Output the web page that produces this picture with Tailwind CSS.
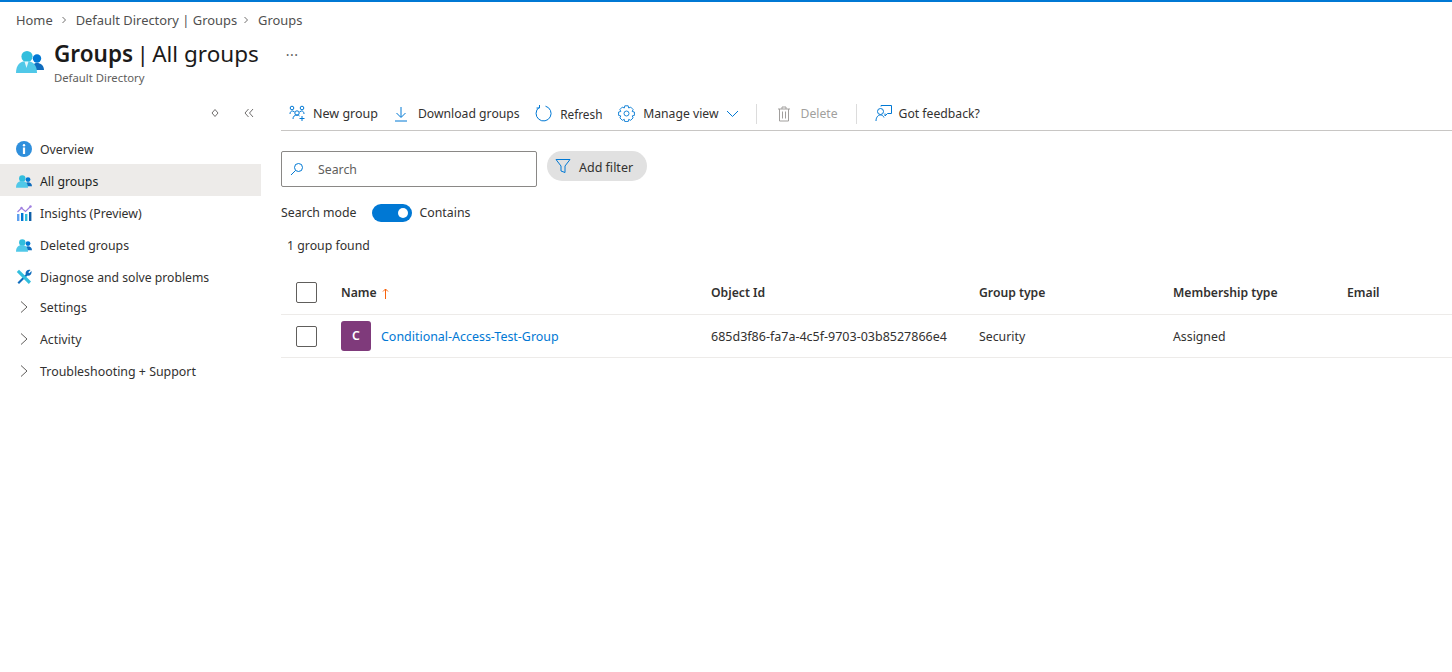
<!DOCTYPE html>
<html lang="en">
<head>
<meta charset="UTF-8">
<title>Groups | All groups</title>
<script src="https://cdn.jsdelivr.net/npm/@tailwindcss/browser@4"></script>
</head>
<body class="bg-white">
<div class="w-[1452px] h-[672px] overflow-hidden border-t-2 border-[#0078d4] font-['Noto_Sans','Open_Sans',sans-serif] text-[12.3px] text-[#323130]">

  <!-- breadcrumb -->
  <nav class="h-[31px] pl-[16px] pt-[5px] flex items-center text-[12.9px] text-[#505050] leading-[18px]">
    <span>Home</span>
    <svg class="w-[8px] h-[8px] ml-[7px] mr-[8px]" viewBox="0 0 8 8" fill="none" stroke="#605e5c" stroke-width="0.9"><path d="M2.5 1l3 3-3 3"/></svg>
    <span>Default Directory | Groups</span>
    <svg class="w-[8px] h-[8px] ml-[5px] mr-[8px]" viewBox="0 0 8 8" fill="none" stroke="#605e5c" stroke-width="0.9"><path d="M2.5 1l3 3-3 3"/></svg>
    <span>Groups</span>
  </nav>

  <!-- page title -->
  <header class="h-[63px] flex pl-[16px]">
    <svg class="w-[28px] h-[28px] mt-[14px]" viewBox="0 0 28 28">
      <circle cx="21" cy="11.500" r="4.200" fill="#0078d4"/>
      <path d="M16 23c0-4.500 1.500-7 5-7s7 2.500 7 7z" fill="#0f6cbd"/>
      <circle cx="11" cy="9.500" r="5.600" fill="#32bedd"/>
      <path d="M0 26c0-8 4-12 10.500-12S21 18 21 26z" fill="#50c8e8"/>
      <path d="M8.500 14.500h4L10.500 21z" fill="#ffffff" opacity=".85"/>
    </svg>
    <div class="ml-[10px] pt-[5px]">
      <div class="text-[22.500px] leading-[32px] text-[#1b1a19]"><span class="font-semibold">Groups</span><span class="-mx-[2.500px]"> | </span>All groups</div>
      <div class="text-[11.300px] leading-[16px] text-[#605e5c]">Default Directory</div>
    </div>
    <div class="ml-[27px] mt-[12px] text-[14px] leading-[20px] text-[#605e5c] tracking-[0.5px]">···</div>
  </header>

  <div class="flex">
    <!-- sidebar -->
    <aside class="w-[261px] shrink-0">
      <div class="h-[34px] flex items-center justify-end pr-[5px]">
        <svg class="w-[10px] h-[10px] mr-[24px]" viewBox="0 0 10 10" fill="none" stroke="#605e5c" stroke-width="0.9"><path d="M5 1.500 8 5 5 8.500 2 5z"/></svg>
        <svg class="w-[10px] h-[10px] mr-[2px]" viewBox="0 0 10 10" fill="none" stroke="#605e5c" stroke-width="0.9"><path d="M4.500 1 1 5l3.500 4M9 1 5.500 5 9 9"/></svg>
      </div>
      <ul>
        <li class="h-[32px] mt-[2px] pt-[3px] flex items-center pl-[16px]">
          <svg class="w-[16px] h-[16px] mr-[8px] mb-[1px]" viewBox="0 0 16 16"><circle cx="8" cy="8" r="8" fill="#2f8fdc"/><circle cx="8" cy="4.300" r="1.200" fill="#fff"/><rect x="6.900" y="6.500" width="2.200" height="6.500" fill="#fff"/></svg>
          <span class="pt-[2px]">Overview</span>
        </li>
        <li class="h-[32px] pt-[3px] flex items-center pl-[16px] bg-[#edebe9] text-[#201f1e]">
          <svg class="w-[16px] h-[16px] mr-[8px] mb-[1px]" viewBox="0 0 28 28"><circle cx="21" cy="11.500" r="4.200" fill="#0078d4"/><path d="M16 23c0-4.500 1.500-7 5-7s7 2.500 7 7z" fill="#0f6cbd"/><circle cx="11" cy="9.500" r="5.600" fill="#32bedd"/><path d="M0 26c0-8 4-12 10.500-12S21 18 21 26z" fill="#50c8e8"/></svg>
          <span class="pt-[2px]">All groups</span>
        </li>
        <li class="h-[32px] pt-[3px] flex items-center pl-[16px]">
          <svg class="w-[16px] h-[16px] mr-[8px] mb-[1px]" viewBox="0 0 16 16"><rect x="1" y="9" width="2.400" height="7" fill="#5ea0ef"/><rect x="5" y="8" width="2.400" height="8" fill="#0078d4"/><rect x="9" y="9" width="2.400" height="7" fill="#32bedd"/><rect x="13" y="7" width="2.400" height="9" fill="#0f5fa8"/><path d="M1.500 7 5.500 3 9.500 6.500 14.500 1.500" fill="none" stroke="#9f7fe0" stroke-width="1.200"/><circle cx="5.500" cy="3" r="1.200" fill="#9f7fe0"/><circle cx="14.500" cy="1.500" r="1.200" fill="#9f7fe0"/></svg>
          <span class="pt-[2px]">Insights (Preview)</span>
        </li>
        <li class="h-[32px] pt-[3px] flex items-center pl-[16px]">
          <svg class="w-[16px] h-[16px] mr-[8px] mb-[1px]" viewBox="0 0 28 28"><circle cx="21" cy="11.500" r="4.200" fill="#0078d4"/><path d="M16 23c0-4.500 1.500-7 5-7s7 2.500 7 7z" fill="#0f6cbd"/><circle cx="11" cy="9.500" r="5.600" fill="#32bedd"/><path d="M0 26c0-8 4-12 10.500-12S21 18 21 26z" fill="#50c8e8"/></svg>
          <span class="pt-[2px]">Deleted groups</span>
        </li>
        <li class="h-[32px] pt-[3px] flex items-center pl-[16px]">
          <svg class="w-[16px] h-[16px] mr-[8px] mb-[1px]" viewBox="0 0 16 16"><path d="M1.500 13.500 10.500 4.500l1.500 1.500-9 9z" fill="#0f6cbd"/><path d="M3 .8 15 12.500 12.800 15 .8 3z" fill="#32bedd"/><path d="M9.500 4.500C9.700 2 11.800.3 14.500 1l-2.200 2.200 1 1L15.500 2c.6 2.800-1.700 5.300-4.200 4.500z" fill="#0f6cbd"/></svg>
          <span class="pt-[2px] text-[12.200px]">Diagnose and solve problems</span>
        </li>
        <li class="h-[32px] -mt-[2px] pt-[3px] flex items-center pl-[19px]">
          <svg class="w-[10px] h-[14px] mr-[11px] mb-[1px]" viewBox="0 0 10 14" fill="none" stroke="#605e5c" stroke-width="1"><path d="M2 1.500 8 7l-6 5.500"/></svg>
          <span class="pt-[2px]">Settings</span>
        </li>
        <li class="h-[32px] pt-[3px] flex items-center pl-[19px]">
          <svg class="w-[10px] h-[14px] mr-[11px] mb-[1px]" viewBox="0 0 10 14" fill="none" stroke="#605e5c" stroke-width="1"><path d="M2 1.500 8 7l-6 5.500"/></svg>
          <span class="pt-[2px]">Activity</span>
        </li>
        <li class="h-[32px] pt-[3px] flex items-center pl-[19px]">
          <svg class="w-[10px] h-[14px] mr-[11px] mb-[1px]" viewBox="0 0 10 14" fill="none" stroke="#605e5c" stroke-width="1"><path d="M2 1.500 8 7l-6 5.500"/></svg>
          <span class="pt-[2px] text-[12.400px]">Troubleshooting + Support</span>
        </li>
      </ul>
    </aside>

    <!-- content -->
    <main class="flex-1 pl-[20px]">
      <div class="h-[35px] border-b border-[#c8c6c4] flex items-center pl-[8px] pt-[3px] text-[12.200px]">
        <svg class="w-[17px] h-[17px] mr-[7px] mb-[2px]" viewBox="0 0 17 17" fill="none" stroke="#0078d4" stroke-width="1"><circle cx="3" cy="3" r="1.800"/><circle cx="13" cy="3" r="1.800"/><circle cx="8" cy="8" r="2.200"/><path d="M1 9c0-2 1-3 2.500-3l2 .800M15 9c0-2-1-3-2.500-3l-2 .800M4 14c0-2.500 1.500-4 4-4 1 0 2 .300 2.500 1M13 11v5M10.500 13.500h5"/></svg>
        <span class="text-[12.500px]">New group</span>
        <svg class="w-[14px] h-[16px] ml-[16px] mr-[10px] mb-[2px]" viewBox="0 0 14 16" fill="none" stroke="#0078d4" stroke-width="1"><path d="M7 1v10M2.500 7 7 11.500 11.500 7M1 15h12"/></svg>
        <span>Download groups</span>
        <svg class="w-[17px] h-[17px] ml-[15.500px] mr-[8px] mb-[2px]" viewBox="0 0 17 17" fill="none" stroke="#0078d4" stroke-width="1"><path d="M10.500 1.200A7.500 7.500 0 1 1 4 2.500M4.500 0v3H1.500"/></svg>
        <span class="w-[44px] text-[11.800px]">Refresh</span>
        <svg class="w-[17px] h-[17px] ml-[14px] mr-[8px] mb-[2px]" viewBox="0 0 17 17" fill="none" stroke="#0078d4" stroke-width="0.9"><circle cx="8.500" cy="8.500" r="2.500"/><path d="M6.800.800h3.400l.500 2.200 2-.900 2.400 2.400-.900 2 2.200.500v3.400l-2.200.500.900 2-2.400 2.400-2-.900-.500 2.200H6.800l-.500-2.200-2 .900-2.400-2.400.900-2-2.200-.500V7l2.200-.500-.900-2 2.400-2.400 2 .900z"/></svg>
        <span>Manage view</span>
        <svg class="w-[13px] h-[8px] ml-[8px] mb-[2px]" viewBox="0 0 13 8" fill="none" stroke="#0078d4" stroke-width="1"><path d="M1 1l5.500 5.500L12 1"/></svg>
        <div class="w-px h-[20px] bg-[#dcdcdc] ml-[17px] mb-[2px]"></div>
        <svg class="w-[14px] h-[16px] ml-[20px] mr-[9px] mb-[2px]" viewBox="0 0 14 16" fill="none" stroke="#a19f9d" stroke-width="1"><path d="M1 3h12M5 3V1h4v2M2.500 3v12h9V3M5.500 5.500v7M8.500 5.500v7"/></svg>
        <span class="text-[#a19f9d]">Delete</span>
        <div class="w-px h-[20px] bg-[#dcdcdc] ml-[18px] mb-[2px]"></div>
        <svg class="w-[17px] h-[17px] ml-[18px] mr-[7px] mb-[2px]" viewBox="0 0 17 17" fill="none" stroke="#0078d4" stroke-width="1"><path d="M6 1.500V.5h10.500v8H12.500L10 11V8.500"/><circle cx="5.500" cy="6.500" r="3"/><path d="M1 16c0-3 1.500-6 4.500-6 1.500 0 3 1 3.500 2.500"/></svg>
        <span>Got feedback?</span>
      </div>

      <div class="flex mt-[20px]">
        <div class="w-[256px] h-[36px] border border-[#8a8886] rounded-[2px] flex items-center pl-[8px]">
          <svg class="w-[14px] h-[14px] mr-[14px]" viewBox="0 0 14 14" fill="none" stroke="#0078d4" stroke-width="1"><circle cx="8.500" cy="5.500" r="4"/><path d="M5.500 8.500 1 13"/></svg>
          <span class="text-[#605e5c] pt-[2px]">Search</span>
        </div>
        <div class="w-[100px] h-[30px] ml-[10px] rounded-full bg-[#e1e1e1] flex items-center pl-[8px]">
          <svg class="w-[16px] h-[16px] mr-[8px]" viewBox="0 0 16 16" fill="none" stroke="#0078d4" stroke-width="1"><path d="M1 1.500h14L10 8v6.500L6 13V8z"/></svg>
          <span class="text-[12.500px] pt-[5px]">Add filter</span>
        </div>
      </div>

      <div class="flex items-center h-[18px] mt-[17px]">
        <span>Search mode</span>
        <div class="w-[40px] h-[18px] ml-[15px] rounded-full bg-[#0078d4] flex items-center justify-end pr-[4px]">
          <div class="w-[10px] h-[10px] rounded-full bg-white"></div>
        </div>
        <span class="ml-[8px]">Contains</span>
      </div>

      <div class="mt-[15px] ml-[6px] h-[18px] leading-[18px]">1 group found</div>

      <!-- table -->
      <div class="mt-[16px] h-[44px] border-b border-[#edebe9] grid grid-cols-[60px_370px_268px_194px_174px_1fr] items-center font-semibold text-[12.200px]">
        <div class="pl-[15px]"><div class="w-[21px] h-[21px] border border-[#605e5c] rounded-[2px]"></div></div>
        <div class="flex items-center pt-[2px]">Name
          <svg class="w-[7px] h-[11px] ml-[5px]" viewBox="0 0 7 11" fill="none" stroke="#f7630c" stroke-width="1"><path d="M3.500 11V1M1 3.500 3.500 1 6 3.500"/></svg>
        </div>
        <div class="pt-[2px]">Object Id</div>
        <div class="pt-[2px]">Group type</div>
        <div class="pt-[2px]">Membership type</div>
        <div class="pt-[2px]">Email</div>
      </div>
      <div class="h-[43px] border-b border-[#edebe9] grid grid-cols-[60px_370px_268px_194px_174px_1fr] items-center">
        <div class="pl-[15px] pt-[1px]"><div class="w-[21px] h-[21px] border border-[#605e5c] rounded-[2px]"></div></div>
        <div class="flex items-center">
          <div class="w-[30px] h-[30px] rounded-[3px] bg-[#7f3a7b] text-white font-semibold flex items-center justify-center mr-[10px]">C</div>
          <span class="text-[#0078d4] pt-[2px] text-[12.450px]">Conditional-Access-Test-Group</span>
        </div>
        <div class="pt-[2px] text-[12.500px]">685d3f86-fa7a-4c5f-9703-03b8527866e4</div>
        <div class="pt-[2px]">Security</div>
        <div class="pt-[2px]">Assigned</div>
        <div></div>
      </div>
    </main>
  </div>
</div>
</body>
</html>
